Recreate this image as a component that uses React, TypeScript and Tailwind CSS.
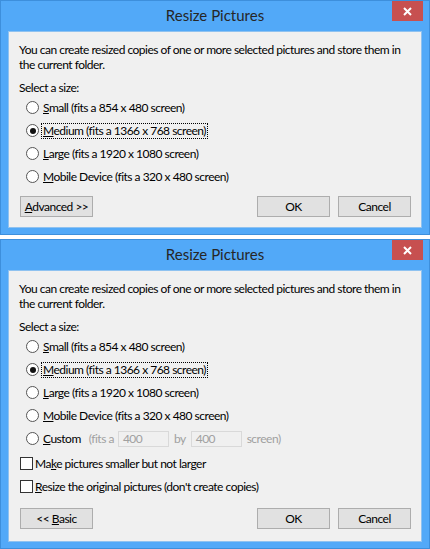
import type { ReactNode } from 'react';

const font = { fontFamily: 'Lato, "Noto Sans", sans-serif' };

function CloseButton() {
  return (
    <div className="flex h-[20px] w-[31px] items-center justify-center justify-self-end bg-[#c75050]">
      <svg width="9" height="9" viewBox="0 0 9 9">
        <path d="M1 1 L8 8 M8 1 L1 8" stroke="#fff" strokeWidth="2" />
      </svg>
    </div>
  );
}

function Radio({ checked, children, focused }: { checked?: boolean; children: ReactNode; focused?: boolean }) {
  return (
    <div className="flex h-[23px] items-center">
      <span className="ml-[7px] flex h-[13px] w-[13px] items-center justify-center rounded-full border border-[#555] bg-white">
        {checked && <span className="h-[6px] w-[6px] rounded-full bg-[#111]" />}
      </span>
      <span
        className={`ml-[3px] px-[1px] leading-[14px] ${
          focused ? 'outline outline-1 outline-dotted outline-black' : ''
        }`}
      >
        {children}
      </span>
    </div>
  );
}

function Checkbox({ children }: { children: ReactNode }) {
  return (
    <div className="flex h-[23px] items-center">
      <span className="ml-[1px] h-[13px] w-[13px] border border-[#333] bg-white" />
      <span className="ml-[2px]">{children}</span>
    </div>
  );
}

function Button({ children }: { children: ReactNode }) {
  return (
    <div className="flex h-[21px] w-[73px] items-center justify-center border border-[#adadad] bg-[#e1e1e1]">
      {children}
    </div>
  );
}

function Window({ children }: { children: ReactNode }) {
  return (
    <div className="border border-[#3d8fdc] bg-[#52a9f8]">
      <div className="grid h-[30px] grid-cols-[1fr_auto_1fr] items-start px-[6px]">
        <span />
        <span className="pt-[4px] text-[15px] leading-[20px] text-[#262626]">Resize Pictures</span>
        <CloseButton />
      </div>
      <div className="mx-[7px] mb-[6px] border border-[#8fc2f0] bg-[#f0f0f0] px-[10px] pt-[10px] text-[12px] leading-[15px] tracking-[-0.5px] text-black">
        {children}
      </div>
    </div>
  );
}

function Intro() {
  return (
    <>
      <p className="whitespace-nowrap">
        You can create resized copies of one or more selected pictures and store them in
        <br />
        the current folder.
      </p>
      <p className="mt-[8px]">Select a size:</p>
    </>
  );
}

function SizeOptions() {
  return (
    <div className="mt-[1px]">
      <Radio>
        <u>S</u>mall (fits a 854 x 480 screen)
      </Radio>
      <Radio checked focused>
        <u>M</u>edium (fits a 1366 x 768 screen)
      </Radio>
      <Radio>
        <u>L</u>arge (fits a 1920 x 1080 screen)
      </Radio>
      <Radio>
        <u>M</u>obile Device (fits a 320 x 480 screen)
      </Radio>
    </div>
  );
}

export default function App() {
  return (
    <div className="flex w-[430px] flex-col gap-[4px] bg-white" style={font}>
      <Window>
        <Intro />
        <SizeOptions />
        <div className="mt-[8px] flex items-center pb-[10px]">
          <div className="ml-[1px]">
            <Button>
              <span>
                <u>A</u>dvanced &gt;&gt;
              </span>
            </Button>
          </div>
          <div className="ml-auto flex gap-[8px]">
            <Button>OK</Button>
            <Button>Cancel</Button>
          </div>
        </div>
      </Window>

      <Window>
        <Intro />
        <SizeOptions />
        <div className="flex h-[23px] items-center">
          <span className="ml-[7px] h-[13px] w-[13px] rounded-full border border-[#555] bg-white" />
          <span className="ml-[4px]">
            <u>C</u>ustom
          </span>
          <span className="ml-[8px] text-[#a0a0a0]">(fits a</span>
          <span className="ml-[4px] flex h-[16px] w-[51px] items-center border border-[#d9d9d9] px-[4px] text-[#a0a0a0]">
            400
          </span>
          <span className="ml-[5px] text-[#a0a0a0]">by</span>
          <span className="ml-[5px] flex h-[16px] w-[51px] items-center border border-[#d9d9d9] px-[4px] text-[#a0a0a0]">
            400
          </span>
          <span className="ml-[5px] text-[#a0a0a0]">screen)</span>
        </div>
        <div className="mt-[2px]">
          <Checkbox>
            Ma<u>k</u>e pictures smaller but not larger
          </Checkbox>
          <Checkbox>
            <u>R</u>esize the original pictures (don't create copies)
          </Checkbox>
        </div>
        <div className="mt-[10px] flex items-center pb-[12px]">
          <div className="ml-[1px]">
            <Button>
              <span>
                &lt;&lt; <u>B</u>asic
              </span>
            </Button>
          </div>
          <div className="ml-auto flex gap-[8px]">
            <Button>OK</Button>
            <Button>Cancel</Button>
          </div>
        </div>
      </Window>
    </div>
  );
}
